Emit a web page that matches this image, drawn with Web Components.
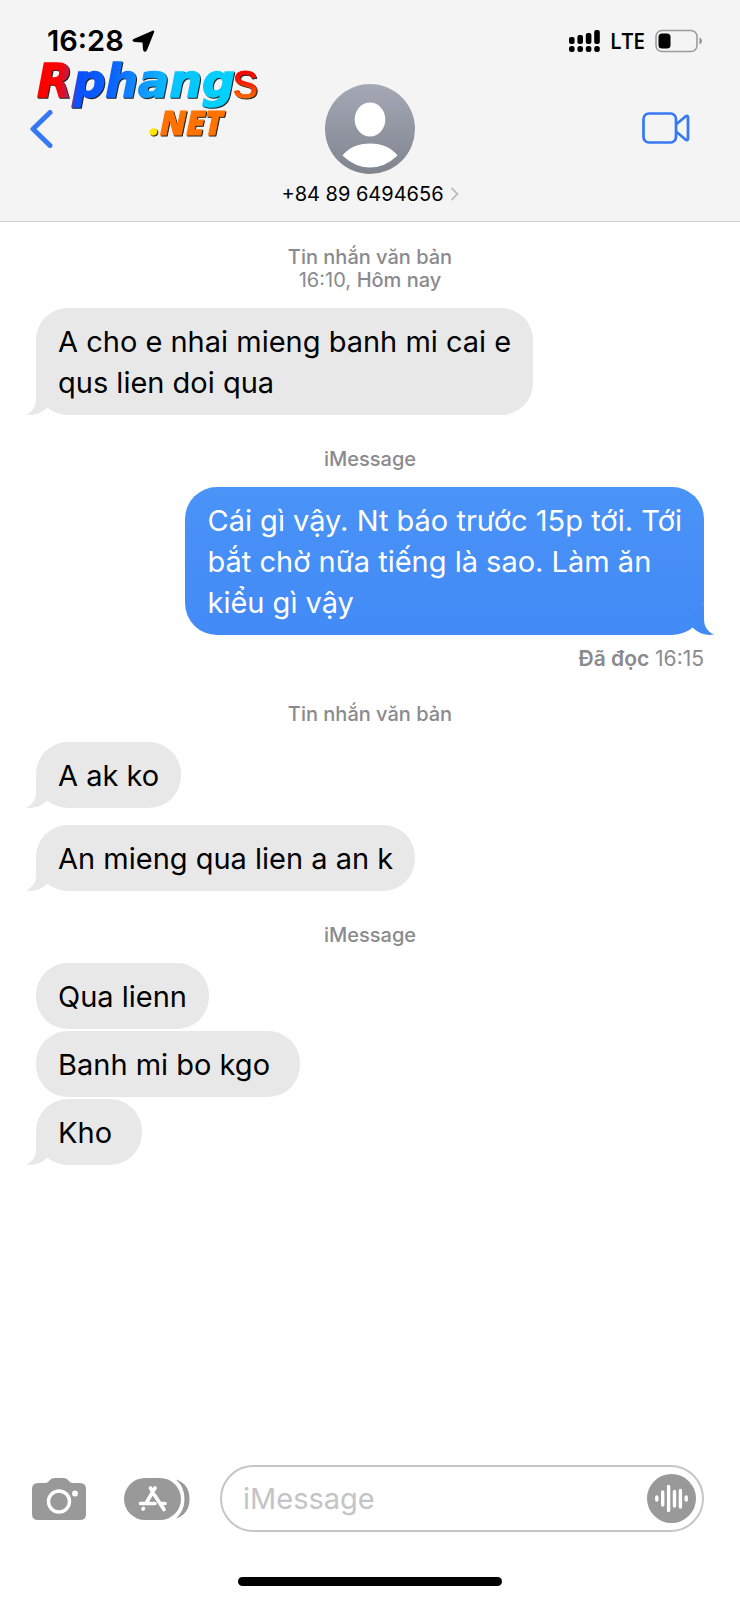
<!DOCTYPE html>
<html lang="vi">
<head>
<meta charset="utf-8">
<meta name="viewport" content="width=device-width, initial-scale=1">
<title>+84 89 6494656</title>
<style>
  body { margin: 0; background: #fff; font-family: Inter, "Liberation Sans", sans-serif; color: #000; }
</style>
</head>
<body>
<chat-screen>
  <chat-header slot="header" contact="+84 89 6494656">
    <status-bar slot="status" time="16:28" network="LTE"></status-bar>
    <site-logo slot="logo"></site-logo>
  </chat-header>
  <chat-label><strong>Tin nhắn văn bản</strong><br>16:10, <strong>Hôm nay</strong></chat-label>
  <chat-bubble tail>A cho e nhai mieng banh mi cai e<br>qus lien doi qua</chat-bubble>
  <chat-label>iMessage</chat-label>
  <chat-bubble sent tail>Cái gì vậy. Nt báo trước 15p tới. Tới<br>bắt chờ nữa tiếng là sao. Làm ăn<br>kiểu gì vậy</chat-bubble>
  <read-receipt><strong>Đã đọc</strong> 16:15</read-receipt>
  <chat-label>Tin nhắn văn bản</chat-label>
  <chat-bubble tail>A ak ko</chat-bubble>
  <chat-bubble tail>An mieng qua lien a an k</chat-bubble>
  <chat-label>iMessage</chat-label>
  <chat-bubble>Qua lienn</chat-bubble>
  <chat-bubble>Banh mi bo kgo&nbsp;</chat-bubble>
  <chat-bubble tail>Kho&nbsp;</chat-bubble>
  <message-composer slot="composer"></message-composer>
</chat-screen>

<script>
const define = (name, html, setup) => {
  const template = document.createElement('template');
  template.innerHTML = html;
  customElements.define(name, class extends HTMLElement {
    constructor() {
      super();
      this.attachShadow({ mode: 'open' }).append(template.content.cloneNode(true));
    }
    connectedCallback() { if (setup) setup(this, this.shadowRoot); }
  });
};

define('chat-screen', `
  <style>
    :host { display: flex; flex-direction: column; min-height: 100vh; }
    main { flex: 1; display: flex; flex-direction: column; align-items: flex-start; padding: 24px 36px; }
  </style>
  <slot name="header"></slot>
  <main><slot></slot></main>
  <slot name="composer"></slot>`);

define('status-bar', `
  <style>
    :host { display: flex; justify-content: space-between; align-items: center; height: 34px; padding: 0 38px 0 47px; }
    div { display: flex; align-items: center; }
    .time { font-size: 29px; line-height: 30px; font-weight: 600; gap: 8px; }
    .net { font: 600 21px/24px "Open Sans", "Noto Sans", sans-serif; gap: 10px; }
    svg { display: block; }
  </style>
  <div class="time"><span id="time"></span>
    <svg width="23" height="23" viewBox="0 0 23 23" aria-hidden="true"><path d="M20.500.7Q23 0 22 2.500L15 20Q14.200 22 12.700 21.700Q11.300 21.500 11 19.500L10.500 12.500 3 12Q.5 11.700.5 10.400Q.5 9.400 2.200 8.700Z"/></svg>
  </div>
  <div class="net">
    <svg width="31" height="24" viewBox="0 0 31 24" aria-hidden="true">
      <rect x="0" y="8" width="5.600" height="7" rx="2"/><rect x="8.400" y="6" width="5.600" height="9" rx="2"/><rect x="16.800" y="4" width="5.600" height="11" rx="2"/><rect x="25.200" y="1" width="5.600" height="14" rx="2"/>
      <rect x="0" y="17" width="5.600" height="6" rx="2.500"/><rect x="8.400" y="17" width="5.600" height="6" rx="2.500"/><rect x="16.800" y="17" width="5.600" height="6" rx="2.500"/><rect x="25.200" y="17" width="5.600" height="6" rx="2.500"/>
    </svg>
    <span id="network"></span>
    <svg width="47" height="24" viewBox="0 0 47 24" aria-hidden="true">
      <rect x="1" y="1.500" width="41" height="21" rx="6" fill="none" stroke="#9c9c9c" stroke-width="1.600"/>
      <rect x="3.500" y="4.500" width="12" height="15" rx="3.500"/>
      <path d="M44.500 8.500Q47 9.500 47 12T44.500 15.500Z" fill="#8e8e8e"/>
    </svg>
  </div>`, (host, root) => {
  root.getElementById('time').textContent = host.getAttribute('time');
  root.getElementById('network').textContent = host.getAttribute('network');
});

define('site-logo', `
  <style>
    :host { display: block; }
    svg { display: block; overflow: visible; filter: drop-shadow(1px 1px 0 #222); }
  </style>
  <svg width="226" height="84" viewBox="0 0 226 84">
    <defs>
      <linearGradient id="a" gradientUnits="userSpaceOnUse" x1="0" y1="20" x2="205" y2="40">
        <stop offset="0" stop-color="#f00"/><stop offset=".1" stop-color="#f00"/><stop offset=".17" stop-color="#a3285f"/><stop offset=".2" stop-color="#0b50ff"/>
        <stop offset=".36" stop-color="#0a62ff"/><stop offset=".5" stop-color="#1193ff"/><stop offset=".66" stop-color="#06c4ff"/><stop offset="1" stop-color="#00d5ff"/>
      </linearGradient>
      <linearGradient id="b" gradientUnits="userSpaceOnUse" x1="0" y1="10" x2="0" y2="40">
        <stop offset="0" stop-color="#f40000"/><stop offset=".4" stop-color="#f21e00"/><stop offset="1" stop-color="#ff7500"/>
      </linearGradient>
    </defs>
    <text x="0" y="37" font-family="DejaVu Sans" font-size="46" font-weight="700" font-style="italic" fill="url(#a)" stroke="url(#a)" stroke-width="1.500">Rphang</text>
    <text x="196" y="38" font-family="Liberation Sans" font-size="50" font-weight="400" fill="url(#b)" stroke="url(#b)">s</text>
    <text x="113" y="75" font-family="Open Sans" font-size="33" font-weight="800" font-style="italic" fill="#ff7200" stroke="#ff7200"><tspan fill="#ffe600" stroke="#ffe600">.</tspan>NET</text>
  </svg>`);

define('chat-header', `
  <style>
    :host { display: block; position: relative; padding-top: 24px; background: #f4f4f4; border-bottom: 1px solid #cdcdcf; }
    nav { display: grid; grid-template-columns: 1fr auto 1fr; align-items: start; padding: 26px 50px 15px 30px; }
    button { display: block; padding: 0; border: 0; background: none; font: inherit; color: #3478f6; }
    svg { display: block; }
    .back { margin-top: 26px; justify-self: start; }
    .video { margin-top: 28px; justify-self: end; }
    .contact { margin-left: 20px; color: #000; display: grid; justify-items: center; gap: 8px; }
    .name { display: flex; align-items: center; gap: 6px; font-size: 20px; line-height: 24px; }
    ::slotted([slot=logo]) { position: absolute; left: 37px; top: 60px; }
  </style>
  <slot name="status"></slot>
  <nav>
    <button class="back" aria-label="Back"><svg width="24" height="38" viewBox="0 0 24 38"><path d="M20 2.500 3 19 20 35.500" fill="none" stroke="currentColor" stroke-width="5" stroke-linecap="round" stroke-linejoin="round"/></svg></button>
    <button class="contact">
      <svg width="90" height="90" viewBox="0 0 90 90" aria-hidden="true">
        <defs><linearGradient id="g" x2="0" y2="1"><stop stop-color="#a5a9b5"/><stop offset="1" stop-color="#80848f"/></linearGradient></defs>
        <circle cx="45" cy="45" r="45" fill="url(#g)"/>
        <ellipse cx="45" cy="35.500" rx="15.300" ry="17" fill="#fff"/>
        <path d="M17.500 71.500Q27 59.500 45 59.500T72.500 71.500Q60 83.500 45 83.500T17.500 71.500Z" fill="#fff"/>
      </svg>
      <span class="name"><span id="contact"></span><svg width="9" height="14" viewBox="0 0 9 14" aria-hidden="true"><path d="M1.500 1 7.500 7 1.500 13" fill="none" stroke="#bdbdbf" stroke-width="1.800"/></svg></span>
    </button>
    <button class="video" aria-label="FaceTime"><svg width="48" height="32" viewBox="0 0 48 32"><g fill="none" stroke="currentColor" stroke-width="2.700" stroke-linejoin="round"><rect x="1.500" y="1.500" width="32.500" height="29" rx="5.500"/><path d="M34 12.500 43.500 4.500Q46 3 46 5.500V26.500Q46 29 43.500 27.500L34 19.500"/></g></svg></button>
  </nav>
  <slot name="logo"></slot>`, (host, root) => {
  root.getElementById('contact').textContent = host.getAttribute('contact');
});

define('chat-label', `
  <style>
    :host { display: block; align-self: center; margin: 33px 0 16px; text-align: center; font-size: 20px; line-height: 23px; font-weight: 500; color: #8a8a8e; }
    :host(:first-of-type) { margin-top: 0; font-weight: 400; }
    ::slotted(strong) { font-weight: 500; }
  </style>
  <slot></slot>`);

define('read-receipt', `
  <style>
    :host { display: block; align-self: flex-end; margin-top: 12px; font-size: 21px; line-height: 23px; color: #8a8a8e; }
    ::slotted(strong) { font-weight: 600; }
  </style>
  <slot></slot>`);

define('chat-bubble', `
  <style>
    :host { display: block; position: relative; box-sizing: border-box; max-width: 80%; margin-bottom: 2px; padding: 13px 22px 12px; border-radius: 32px; background: #e8e8e8; font-size: 29px; line-height: 41px; }
    :host([tail]) { margin-bottom: 0; }
    :host([sent]) { align-self: flex-end; background: linear-gradient(#4a93f7, #428af6); color: #fff; }
    svg { display: none; position: absolute; left: -10px; bottom: 0; fill: #e8e8e8; }
    :host([tail]) svg { display: block; }
    :host([sent]) svg { left: auto; right: -10px; transform: scaleX(-1); fill: #428af6; }
  </style>
  <svg width="24" height="30" viewBox="0 0 24 30" aria-hidden="true"><path d="M10 0V14C10 22 6 27 0 29.500C8 31 16 28 21.500 22.500L24 12Z"/></svg>
  <slot></slot>`, host => {
  const next = host.nextElementSibling;
  if (host.hasAttribute('tail') && next && next.localName === 'chat-bubble') host.style.marginBottom = '17px';
});

define('message-composer', `
  <style>
    :host { display: block; padding: 0 36px 14px 32px; }
    form { display: flex; align-items: center; }
    button { flex: none; display: block; padding: 0; border: 0; background: none; color: #999; }
    svg { display: block; }
    .apps { margin: 0 30px 0 38px; }
    .field { flex: 1; min-width: 0; display: flex; align-items: center; box-sizing: border-box; height: 67px; padding: 0 6px 0 21px; border: 2px solid #c6c6c8; border-radius: 34px; }
    input { flex: 1; width: 0; min-width: 0; padding: 0; border: 0; outline: 0; background: none; font: inherit; font-size: 29px; line-height: 41px; }
    input::placeholder { color: #c4c4c6; opacity: 1; }
    .bar { margin: 45px -36px 0 -32px; }
    .home { width: 264px; height: 9px; margin: 0 auto; border-radius: 5px; background: #000; }
  </style>
  <form>
    <button type="button" aria-label="Camera"><svg width="54" height="42" viewBox="0 0 54 42"><path fill="currentColor" d="M6 5H13Q15 5 16.500 3.500L18.500 1.500Q20 0 22 0H32Q34 0 35.500 1.500L37.500 3.500Q39 5 41 5H48Q54 5 54 11V36Q54 42 48 42H6Q0 42 0 36V11Q0 5 6 5Z"/><circle cx="27" cy="23.500" r="10.500" fill="none" stroke="#fff" stroke-width="3.400"/><circle cx="43" cy="15.500" r="3" fill="#fff"/></svg></button>
    <button type="button" class="apps" aria-label="Apps"><svg width="66" height="42" viewBox="0 0 66 42"><rect width="57" height="42" rx="21" fill="currentColor"/><path fill="currentColor" d="M52 1.500Q65.500 6 65.500 21T52 40.500Q60.500 33 60.500 21T52 1.500Z"/><g fill="none" stroke="#fff" stroke-width="3.600" stroke-linecap="round"><path d="M26.500 10 28 12.500M31 10 22.500 24.500M16.500 25.500H31M19.500 30.500 19 31M30.500 17 40 31.500M37 25.500H41"/></g></svg></button>
    <div class="field">
      <input type="text" placeholder="iMessage" aria-label="iMessage">
      <button type="button" aria-label="Audio"><svg width="49" height="49" viewBox="0 0 49 49"><circle cx="24.500" cy="24.500" r="24.500" fill="currentColor"/><path d="M9.800 23V26M15.700 18V31M21.600 12.500V36.500M27.500 17.500V32M33.400 16.500V33M39.200 23V26" fill="none" stroke="#fff" stroke-width="3.400" stroke-linecap="round"/></svg></button>
    </div>
  </form>
  <div class="bar"><div class="home"></div></div>`);
</script>
</body>
</html>
